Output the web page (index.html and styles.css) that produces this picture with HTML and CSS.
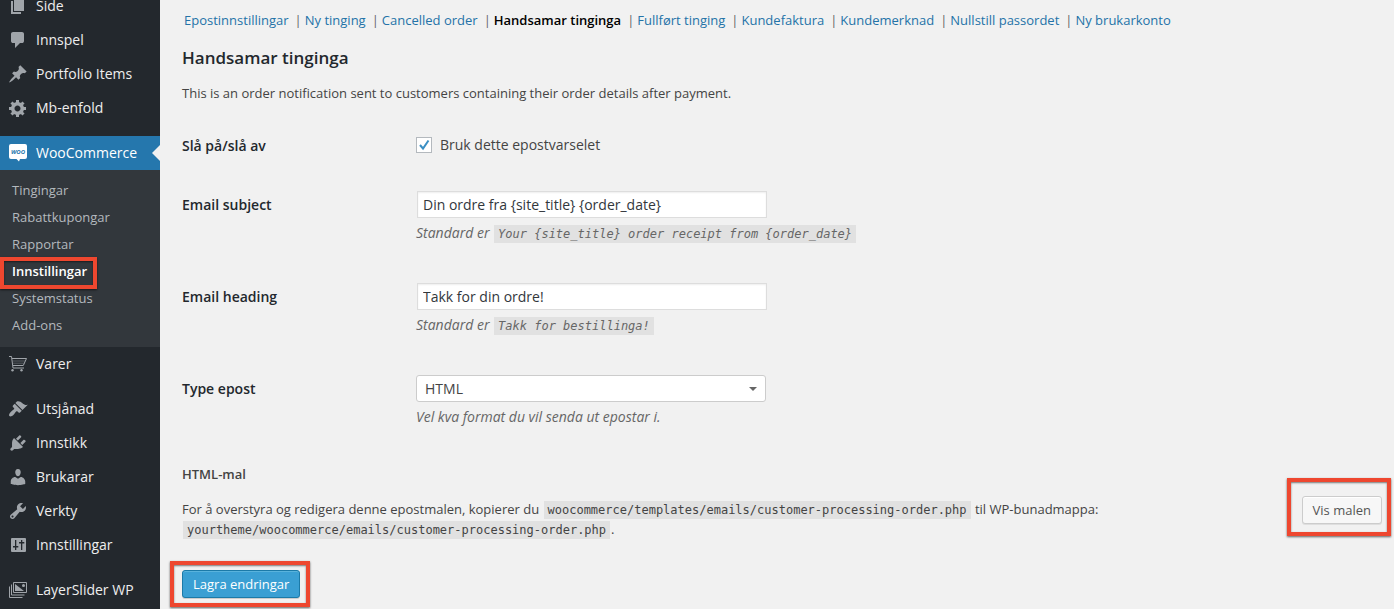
FILE: index.html
```html
<!DOCTYPE html>
<html lang="nn">
<head>
<meta charset="utf-8">
<meta name="viewport" content="width=device-width, initial-scale=1">
<title>Handsamar tinginga – WooCommerce</title>
<link rel="stylesheet" href="styles.css">
</head>
<body>
<div class="layout">
  <aside class="sidebar">
    <nav class="menu" aria-label="Hovudmeny">
      <a class="item" href="#"><svg class="icon" viewBox="0 0 20 20"><path d="M6 15V2h10v13H6zm-1 1h8v2H3V5h2v11z"/></svg>Side</a>
      <a class="item" href="#"><svg class="icon" viewBox="0 0 20 20"><path d="M5 2h9q.82 0 1.41.59T16 4v7q0 .82-.59 1.41T14 13h-2l-5 5v-5H5q-.82 0-1.41-.59T3 11V4q0-.82.59-1.41T5 2z"/></svg>Innspel</a>
      <a class="item" href="#"><svg class="icon" viewBox="0 0 20 20"><path d="M10.44 3.02l1.82-1.82 6.36 6.35-1.83 1.82c-1.05-.68-2.48-.57-3.41.36l-.75.75c-.92.93-1.04 2.35-.35 3.41l-1.83 1.82-2.41-2.41-2.8 2.79c-.42.42-3.38 2.71-3.8 2.29s1.86-3.39 2.28-3.81l2.79-2.79L4.1 9.36l1.83-1.82c1.05.69 2.48.57 3.4-.36l.75-.75c.93-.92 1.05-2.35.36-3.41z"/></svg>Portfolio Items</a>
      <a class="item" href="#"><svg class="icon" viewBox="0 0 20 20"><path d="M18 12h-2.18c-.17.7-.44 1.35-.81 1.93l1.54 1.54-2.1 2.1-1.54-1.54c-.58.36-1.23.63-1.91.79V19H8v-2.18c-.68-.16-1.33-.43-1.91-.79l-1.54 1.54-2.12-2.12 1.54-1.54c-.36-.58-.63-1.23-.79-1.91H1V9.03h2.17c.16-.7.44-1.35.8-1.94L2.43 5.55l2.1-2.1 1.54 1.54c.58-.37 1.24-.64 1.93-.81V2h3v2.18c.68.16 1.33.43 1.91.79l1.54-1.54 2.12 2.12-1.54 1.54c.36.59.64 1.24.8 1.94H18V12zm-8.5 1.5c1.66 0 3-1.34 3-3s-1.34-3-3-3-3 1.34-3 3 1.34 3 3 3z"/></svg>Mb-enfold</a>
      <a class="item spaced current" href="#"><svg class="icon" viewBox="0 0 20 20"><path d="M3 1h14a2 2 0 0 1 2 2v11a2 2 0 0 1-2 2h-5l-1 2.500-2.500-2.500H3a2 2 0 0 1-2-2V3a2 2 0 0 1 2-2z"/><text class="woo" x="10" y="11" text-anchor="middle">WOO</text></svg>WooCommerce</a>
      <div class="submenu">
        <a href="#">Tingingar</a>
        <a href="#">Rabattkupongar</a>
        <a href="#">Rapportar</a>
        <a class="selected" href="#">Innstillingar<span class="mark mark-menu"></span></a>
        <a href="#">Systemstatus</a>
        <a href="#">Add-ons</a>
      </div>
      <a class="item" href="#"><svg class="icon line" viewBox="0 0 20 20"><path d="M1 2.500h2.500l1.500 11.500h11M4 4.500h14.500l-3.200 7H4.800"/><path class="faint" d="M4.500 7h12.500M4.500 9.200h11.500"/><circle class="solid" cx="4.500" cy="16.300" r="1.200"/><circle class="solid" cx="13.500" cy="16.300" r="1.200"/></svg>Varer</a>
      <a class="item spaced" href="#"><svg class="icon" viewBox="0 0 20 20"><path d="M14.480 11.060L7.410 3.990l1.500-1.500c.5-.56 2.300-.47 3.510.32 1.210.8 1.430 1.280 2.910 2.100 1.180.64 2.450 1.260 4.450.85zm-.71.71L6.700 4.700 4.930 6.470c-.39.39-.39 1.020 0 1.410l1.060 1.060c.39.39.39 1.030 0 1.420-.6.6-1.430 1.110-2.210 1.690-.35.26-.7.53-1.010.84C1.430 14.230.4 16.080 1.400 17.070c.99 1 2.840-.03 4.180-1.360.31-.31.58-.66.85-1.020.57-.78 1.080-1.610 1.690-2.210.39-.39 1.020-.39 1.410 0l1.060 1.060c.39.39 1.020.39 1.410 0z"/></svg>Utsjånad</a>
      <a class="item" href="#"><svg class="icon" viewBox="0 0 20 20"><path d="M13.110 4.360L9.870 7.600 8 5.730l3.240-3.240c.35-.34 1.050-.2 1.560.32.52.51.66 1.210.31 1.550zm-8 1.770l.91-1.120 9.010 9.010-1.190.84c-.71.71-2.630 1.160-3.820 1.160H6.140L4.900 17.260c-.59.59-1.540.59-2.120 0-.59-.58-.59-1.530 0-2.120l1.240-1.240v-3.880c0-1.130.4-3.190 1.090-3.890zm7.260 3.970l3.240-3.240c.34-.35 1.040-.21 1.550.31.52.51.66 1.210.31 1.550l-3.240 3.250z"/></svg>Innstikk</a>
      <a class="item" href="#"><svg class="icon" viewBox="0 0 20 20"><path d="M10 9.250c-2.270 0-2.730-3.440-2.730-3.440C7 4.020 7.820 2 9.970 2c2.160 0 2.980 2.020 2.710 3.810 0 0-.41 3.440-2.680 3.440zm0 2.570L12.720 10c2.390 0 4.520 2.330 4.520 4.530v2.490s-3.650 1.130-7.240 1.130c-3.650 0-7.240-1.130-7.240-1.130v-2.490c0-2.250 1.940-4.480 4.470-4.480z"/></svg>Brukarar</a>
      <a class="item" href="#"><svg class="icon" viewBox="0 0 20 20"><path d="M16.680 9.770c-1.340 1.340-3.300 1.670-4.950.99l-5.410 6.520c-.99.99-2.590.99-3.580 0s-.99-2.590 0-3.570l6.520-5.420c-.68-1.650-.35-3.610.99-4.950 1.280-1.280 3.120-1.620 4.720-1.060l-2.890 2.890 2.820 2.820 2.860-2.870c.53 1.580.18 3.390-1.080 4.650zM3.810 16.210c.4.39 1.040.39 1.430 0 .4-.4.4-1.040 0-1.430-.39-.4-1.030-.4-1.430 0-.39.39-.39 1.030 0 1.430z"/></svg>Verkty</a>
      <a class="item" href="#"><svg class="icon" viewBox="0 0 20 20"><path fill-rule="evenodd" d="M4 3h13a1 1 0 0 1 1 1v12a1 1 0 0 1-1 1H4a1 1 0 0 1-1-1V4a1 1 0 0 1 1-1zM7 5v6H5v1.500h2V15h1.300v-2.500h2V11h-2V5zM13 5v2h-2v1.500h2V15h1.300V8.500h2V7h-2V5z"/></svg>Innstillingar</a>
      <a class="item spaced" href="#"><svg class="icon line" viewBox="0 0 20 20"><path d="M5.500 2.500h13v10h-13zM3.500 4.500v10.500h13M1.500 6.500v11h13"/><path class="solid" d="M7 4l9 7H7z"/><circle class="solid" cx="15.500" cy="5.500" r="1.500"/></svg>LayerSlider WP</a>
    </nav>
  </aside>

  <main class="content">
    <nav class="tabs" aria-label="Epostar">
      <a href="#">Epostinnstillingar</a><a href="#">Ny tinging</a><a href="#">Cancelled order</a><a class="active" href="#">Handsamar tinginga</a><a href="#">Fullført tinging</a><a href="#">Kundefaktura</a><a href="#">Kundemerknad</a><a href="#">Nullstill passordet</a><a href="#">Ny brukarkonto</a>
    </nav>
    <h1 class="title">Handsamar tinginga</h1>
    <p class="intro">This is an order notification sent to customers containing their order details after payment.</p>

    <form class="form">
      <div class="row row-check">
        <span class="label">Slå på/slå av</span>
        <div class="field">
          <label class="check"><input type="checkbox" checked><svg class="tick" viewBox="0 0 16 16"><path d="M4 8l3 3.500 5.500-8"/></svg>Bruk dette epostvarselet</label>
        </div>
      </div>
      <div class="row">
        <label class="label" for="subject">Email subject</label>
        <div class="field">
          <input class="text" id="subject" type="text" value="Din ordre fra {site_title} {order_date}">
          <p class="hint">Standard er <code>Your {site_title} order receipt from {order_date}</code></p>
        </div>
      </div>
      <div class="row">
        <label class="label" for="heading">Email heading</label>
        <div class="field">
          <input class="text" id="heading" type="text" value="Takk for din ordre!">
          <p class="hint">Standard er <code>Takk for bestillinga!</code></p>
        </div>
      </div>
      <div class="row row-last">
        <label class="label" for="type">Type epost</label>
        <div class="field">
          <div class="select"><select id="type"><option>HTML</option></select></div>
          <p class="hint">Vel kva format du vil senda ut epostar i.</p>
        </div>
      </div>

      <h2 class="subtitle">HTML-mal</h2>
      <div class="template">
        <p class="path">For å overstyra og redigera denne epostmalen, kopierer du <code>woocommerce/templates/emails/customer-processing-order.php</code> til WP-bunadmappa: <code>yourtheme/woocommerce/emails/customer-processing-order.php</code>.</p>
        <div class="marked"><button class="button" type="button">Vis malen</button><span class="mark mark-view"></span></div>
      </div>
      <div class="marked"><button class="button primary" type="submit">Lagra endringar</button><span class="mark mark-save"></span></div>
    </form>
  </main>
</div>
</body>
</html>
```
FILE: styles.css
```css
* {
  box-sizing: border-box;
}

body {
  margin: 0;
  background: #f1f1f1;
  color: #444;
  font: 13px/20px "Open Sans", "Noto Sans", sans-serif;
}

p, h1, h2 {
  margin: 0;
}

a {
  color: #2473a8;
  text-decoration: none;
}

.layout {
  display: flex;
  min-height: 100vh;
  overflow: hidden;
}

/* Sidebar */
.sidebar {
  flex: 0 0 160px;
  background: #23282d;
}

.menu {
  display: flex;
  flex-direction: column;
  margin-top: -11px;
}

.item {
  position: relative;
  display: flex;
  align-items: center;
  gap: 8px;
  height: 34px;
  padding-left: 8px;
  color: #eee;
  font-size: 14px;
  font-weight: 500;
  white-space: nowrap;
}

.spaced {
  margin-top: 11px;
}

.current {
  background: #2577ad;
  color: #fff;
}

.current::after {
  content: "";
  position: absolute;
  top: 9px;
  right: 0;
  border: 8px solid transparent;
  border-left: 0;
  border-right-color: #f1f1f1;
}

.icon {
  width: 20px;
  height: 20px;
  fill: #a0a5aa;
}

.line {
  fill: none;
  stroke: #a0a5aa;
}

.line .solid {
  fill: #a0a5aa;
  stroke: none;
}

.line .faint {
  opacity: 0.4;
}

.current .icon {
  fill: #fff;
}

.current .woo {
  fill: #2577ad;
  font-size: 6px;
  font-style: italic;
  font-weight: 700;
}

.submenu {
  display: flex;
  flex-direction: column;
  padding: 7px 0 8px;
  background: #32373c;
}

.submenu a {
  position: relative;
  padding: 0 12px;
  color: #b4b9be;
  line-height: 27px;
}

.submenu .selected {
  color: #fff;
  font-weight: 600;
}

/* Content */
.content {
  flex: 1;
  min-width: 0;
  padding: 10px 12px 11px 22px;
}

.tabs {
  display: flex;
  flex-wrap: wrap;
  padding-left: 2px;
}

.tabs a + a::before {
  content: "|";
  margin: 0 3px 0 6px;
  color: #666;
  font-weight: 400;
}

.tabs .active {
  color: #000;
  font-weight: 600;
}

.title {
  margin-top: 16px;
  color: #23282d;
  font-size: 17px;
  font-weight: 600;
  line-height: 24px;
}

.intro {
  margin-top: 13px;
}

.row {
  display: grid;
  grid-template-columns: 234px minmax(0, 1fr);
  padding-bottom: 25px;
}

.row-check {
  padding: 32px 0 33px;
}

.row-last {
  padding-bottom: 22px;
}

.label {
  padding-top: 4px;
  color: #23282d;
  font-size: 14px;
  font-weight: 600;
}

.row-check .label {
  padding-top: 1px;
}

.check {
  position: relative;
  display: inline-flex;
  align-items: center;
  gap: 8px;
  font-size: 14px;
}

.check input {
  appearance: none;
  width: 16px;
  height: 16px;
  margin: 0;
  border: 1px solid #b4b9be;
  background: #fff;
}

.tick {
  position: absolute;
  left: 0;
  width: 16px;
  height: 16px;
  fill: none;
  stroke: #3a8fc4;
  stroke-width: 2;
}

.text {
  display: block;
  width: 350px;
  max-width: 100%;
  height: 27px;
  margin: 0 0 0 1px;
  padding: 0 5px;
  border: 1px solid #ddd;
  background: #fff;
  box-shadow: inset 0 1px 2px rgba(0, 0, 0, 0.07);
  color: #32373c;
  font: inherit;
  font-size: 14px;
}

.hint {
  padding-top: 5px;
  padding-bottom: 15px;
  color: #666;
  font-size: 14px;
  font-style: italic;
}

code {
  margin: 0 1px;
  padding: 2px 4px;
  background: #e1e1e1;
  font-family: "DejaVu Sans Mono", monospace;
  font-size: 12px;
  line-height: 12px;
  white-space: nowrap;
}

.select {
  position: relative;
  width: 350px;
  max-width: 100%;
}

.select::after {
  content: "";
  position: absolute;
  top: 12px;
  right: 9px;
  border: 4px solid transparent;
  border-top-color: #666;
  border-bottom: 0;
  pointer-events: none;
}

.select select {
  display: block;
  appearance: none;
  width: 100%;
  height: 27px;
  padding: 0 8px;
  border: 1px solid #ccc;
  border-radius: 3px;
  background: #fff;
  color: #444;
  font: inherit;
  font-size: 14px;
}

.subtitle {
  font-size: 13px;
  font-weight: 600;
}

.template {
  display: flex;
  justify-content: space-between;
  align-items: flex-start;
  gap: 24px;
  margin: 12px 0 31px;
}

.template .marked {
  flex: none;
}

.path {
  padding-top: 3px;
}

.marked {
  position: relative;
  width: fit-content;
}

.button {
  display: block;
  height: 28px;
  padding: 0 10px;
  border: 1px solid #ccc;
  border-radius: 3px;
  background: #f7f7f7;
  box-shadow: inset 0 1px 0 #fff, 0 1px 0 rgba(0, 0, 0, 0.08);
  color: #555;
  font: inherit;
}

.primary {
  border-color: #1b7aa8;
  background: #3a9fd3;
  box-shadow: inset 0 1px 0 rgba(120, 200, 230, 0.5), 0 1px 0 rgba(0, 0, 0, 0.15);
  color: #fff;
  font-weight: 500;
}

/* Red call-out frames */
.mark {
  position: absolute;
  border: 4px solid #ee472f;
  box-shadow: 0 1px 2px rgba(0, 0, 0, 0.6), inset 0 1px 2px rgba(0, 0, 0, 0.5);
  pointer-events: none;
}

.mark-menu {
  inset: -1px 63px -4px 0;
}

.mark-view {
  inset: -18px -9px -12px -15px;
}

.mark-save {
  inset: -9px -10px -9px -12px;
}
```
